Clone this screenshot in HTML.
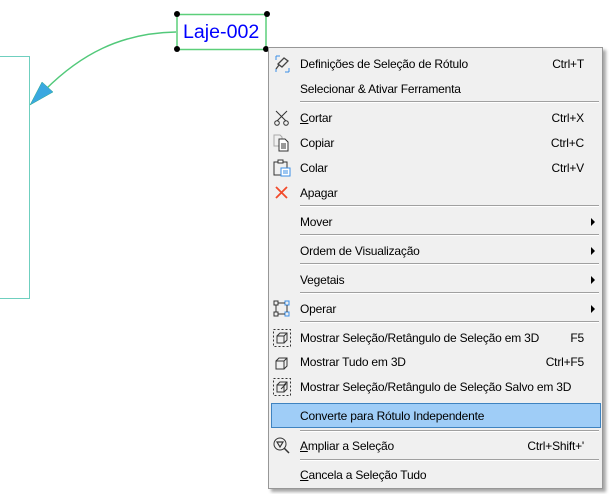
<!DOCTYPE html>
<html><head><meta charset="utf-8"><style>
html,body{margin:0;padding:0;background:#fff;width:609px;height:494px;overflow:hidden;position:relative;font-family:"Liberation Sans",sans-serif}
.menu{position:absolute;left:268px;top:47px;width:335px;height:442px;background:#f0f0f0;border:1px solid #979797;box-sizing:border-box;box-shadow:3px 3px 3px rgba(0,0,0,.35)}
.t{position:absolute;left:300px;font-size:12px;color:#000;line-height:14px;white-space:nowrap;letter-spacing:-0.2px}
.s{position:absolute;font-size:12px;color:#000;line-height:14px;right:25px;text-align:right;letter-spacing:-0.2px}
.sep{position:absolute;left:300px;width:299px;height:1px;background:#a0a0a0;border-bottom:1px solid #fff}
.arr{position:absolute;left:591px;width:0;height:0;border-top:4px solid transparent;border-bottom:4px solid transparent;border-left:4px solid #000}
.ic{position:absolute;left:273px}
u{text-decoration:underline}
</style></head><body>
<svg style="position:absolute;left:0;top:0" width="609" height="494">
<path d="M0 56.5H29.5V298.5H0" fill="none" stroke="#6fcfbf" stroke-width="1"/>
<path d="M176 32 C120 33 80 55 45 90" fill="none" stroke="#52c97a" stroke-width="1.5"/>
<polygon points="30,105 42,82 53,92" fill="#3aa8e0" stroke="#2aa88a" stroke-width="0.5"/>
<rect x="177" y="14.5" width="89" height="35" fill="#fff" stroke="#5ccf7a" stroke-width="1.5"/>
<text x="183" y="38" font-family="Liberation Sans" font-size="19.6" fill="#0000ff">Laje-002</text>
<circle cx="177" cy="14" r="3" fill="#000"/><circle cx="267" cy="14" r="3" fill="#000"/>
<circle cx="177" cy="49" r="3" fill="#000"/><circle cx="266" cy="49" r="3" fill="#000"/>
</svg>
<div class="menu"></div>
<div style="position:absolute;left:271px;top:403px;width:330px;height:25px;background:#9fcdf7;border:1px solid #3f83c0;box-sizing:border-box"></div>

<svg class="ic" style="top:55px" width="20" height="18"><path d="M3 1v4M3 1h4M16 17h-4M16 17v-4M3 17v-3" stroke="#3a8ee6" fill="none"/><path d="M5 9l6-6 4 3-6 6z M6 10l-3 4" stroke="#444" fill="none" stroke-width="1.3"/></svg>
<div class="t" style="top:57px">Definições de Seleção de Rótulo</div><div class="s" style="top:57px">Ctrl+T</div>
<div class="t" style="top:82px">Selecionar &amp; Ativar Ferramenta</div>
<div class="sep" style="top:101px"></div>

<svg class="ic" style="top:109px" width="18" height="18"><path d="M3 2l10 10M14 2L4 12" stroke="#333"/><circle cx="4" cy="14" r="2.3" fill="none" stroke="#333"/><circle cx="13" cy="14" r="2.3" fill="none" stroke="#333"/></svg>
<div class="t" style="top:111px"><u>C</u>ortar</div><div class="s" style="top:111px">Ctrl+X</div>
<svg class="ic" style="top:134px" width="18" height="18"><path d="M1 1h6l2 2v9H1z" fill="none" stroke="#aaa"/><path d="M6 5h6l3 3v9H6z" fill="#fff" stroke="#333"/><path d="M8 10h5M8 12h5M8 14h5" stroke="#333"/></svg>
<div class="t" style="top:136px">Copiar</div><div class="s" style="top:136px">Ctrl+C</div>
<svg class="ic" style="top:159px" width="18" height="18"><path d="M1 3h13v13H1z" fill="none" stroke="#333"/><rect x="5" y="1" width="5" height="3" fill="#fff" stroke="#333"/><rect x="8" y="9" width="9" height="8" fill="#fff" stroke="#3a8ee6"/><path d="M10 12h5M10 14h5" stroke="#3a8ee6"/></svg>
<div class="t" style="top:161px">Colar</div><div class="s" style="top:161px">Ctrl+V</div>
<svg class="ic" style="top:184px" width="18" height="18"><path d="M3 3l11 11M14 3L3 14" stroke="#f24a2a" stroke-width="1.8"/></svg>
<div class="t" style="top:186px">Apagar</div>
<div class="sep" style="top:205px"></div>

<div class="t" style="top:215px">Mover</div><div class="arr" style="top:218px"></div>
<div class="sep" style="top:234px"></div>
<div class="t" style="top:244px">Ordem de Visualização</div><div class="arr" style="top:247px"></div>
<div class="sep" style="top:263px"></div>
<div class="t" style="top:273px">Vegetais</div><div class="arr" style="top:276px"></div>
<div class="sep" style="top:292px"></div>
<svg class="ic" style="top:300px" width="18" height="18"><rect x="1" y="1" width="4" height="4" fill="none" stroke="#333"/><rect x="12" y="1" width="4" height="4" fill="none" stroke="#3a8ee6"/><rect x="1" y="12" width="4" height="4" fill="none" stroke="#333"/><rect x="12" y="12" width="4" height="4" fill="none" stroke="#3a8ee6"/><path d="M5 3h7M3 5v7M14 5v7M5 14h7" stroke="#333"/></svg>
<div class="t" style="top:302px">Operar</div><div class="arr" style="top:305px"></div>
<div class="sep" style="top:321px"></div>

<svg class="ic" style="top:329px" width="18" height="18"><rect x="0.5" y="0.5" width="17" height="17" fill="none" stroke="#333" stroke-dasharray="2,2"/><path d="M4 7h7v7H4zM4 7l3-3h7v7l-3 3M11 7l3-3" fill="none" stroke="#333"/></svg>
<div class="t" style="top:331px">Mostrar Seleção/Retângulo de Seleção em 3D</div><div class="s" style="top:331px">F5</div>
<svg class="ic" style="top:354px" width="18" height="18"><path d="M3 7h8v8H3zM3 7l3-3h8v8l-3 3M11 7l3-3" fill="none" stroke="#333"/></svg>
<div class="t" style="top:355px">Mostrar Tudo em 3D</div><div class="s" style="top:355px">Ctrl+F5</div>
<svg class="ic" style="top:378px" width="18" height="18"><rect x="0.5" y="0.5" width="17" height="17" fill="none" stroke="#333" stroke-dasharray="2,2"/><path d="M4 7h7v7H4zM4 7l3-3h7v7l-3 3M11 7l3-3M8 11l5-5" fill="none" stroke="#333"/></svg>
<div class="t" style="top:380px">Mostrar Seleção/Retângulo de Seleção Salvo em 3D</div>

<div class="t" style="top:409px">Converte para Rótulo Independente</div>
<div class="sep" style="top:430px"></div>
<svg class="ic" style="top:437px" width="18" height="18"><circle cx="7" cy="7" r="6" fill="none" stroke="#333"/><path d="M11 11l5 5" stroke="#333" stroke-width="1.5"/><path d="M4 5l6 0-3 5z" fill="none" stroke="#333" stroke-width="1.2"/></svg>
<div class="t" style="top:439px"><u>A</u>mpliar a Seleção</div><div class="s" style="top:439px">Ctrl+Shift+'</div>
<div class="sep" style="top:459px"></div>
<div class="t" style="top:468px"><u>C</u>ancela a Seleção Tudo</div>
</body></html>
